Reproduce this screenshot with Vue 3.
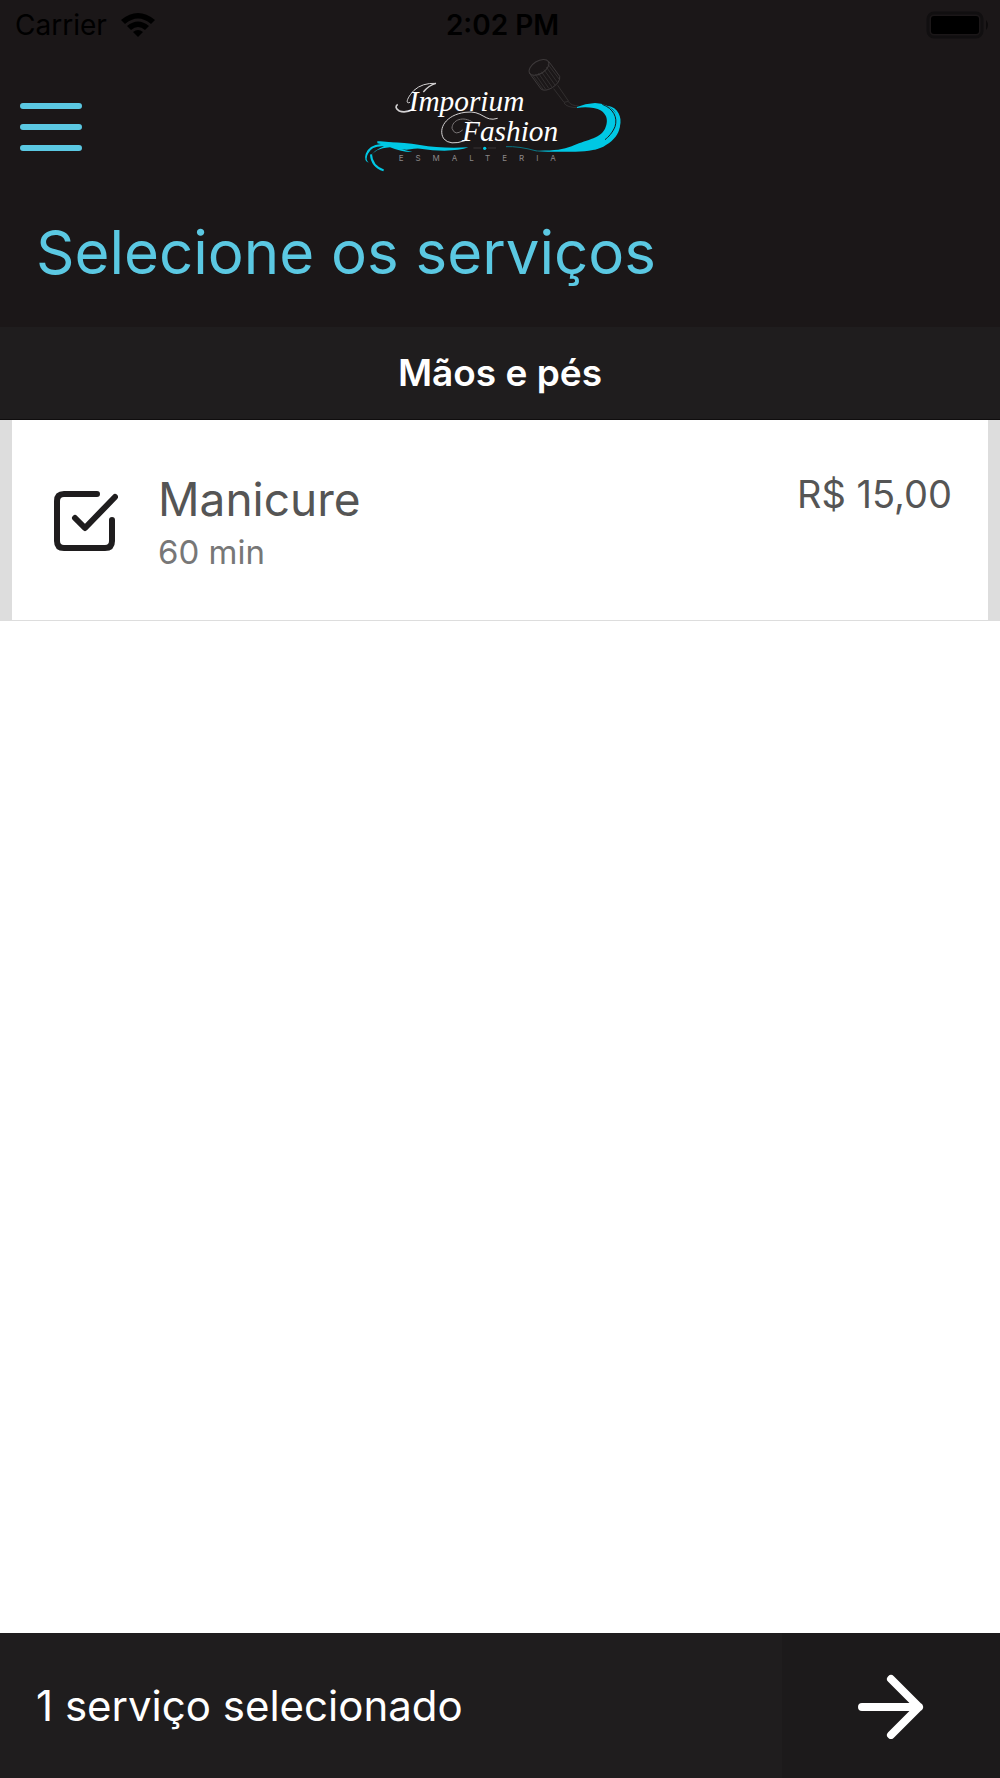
<template>
  <div class="booking">
    <header class="booking__header">
      <!-- Status bar -->
      <div class="status">
        <div class="status__carrier">
          <span>Carrier</span>
          <svg class="status__wifi" viewBox="0 0 34 25" aria-hidden="true">
            <path d="M0 7 Q17 -7 34 7 L30 11 Q17 0 4 11 Z" />
            <path d="M6 13 Q17 4 28 13 L24 17 Q17 11 10 17 Z" />
            <path d="M12 19 Q17 15 22 19 L17 24 Z" />
          </svg>
        </div>
        <span class="status__time">2:02 PM</span>
        <svg class="status__battery" viewBox="0 0 64 28" aria-hidden="true">
          <rect x="2" y="2" width="54" height="24" rx="6" fill="none" stroke="#110f10" stroke-width="3" />
          <rect x="5" y="5" width="48" height="18" rx="3" />
          <path d="M60 9 Q64 14 60 19 Z" fill="#0d0b0c" />
        </svg>
      </div>

      <!-- Menu + logo -->
      <nav class="nav">
        <button class="nav__menu" type="button" aria-label="Menu">
          <svg class="nav__menu-icon" viewBox="0 0 62 48" aria-hidden="true">
            <path d="M3 3 H59 M3 24 H59 M3 45 H59" />
          </svg>
        </button>
        <svg class="nav__logo" viewBox="0 54 900 360" role="img" aria-label="Imporium Fashion Esmalteria">
          <!-- Polish brush -->
          <g fill="none" stroke="#3d393a" stroke-width="3">
            <ellipse cx="567" cy="82" rx="33" ry="19" transform="rotate(-32 567 82)" />
            <path d="M538 99 L573 147 Q584 156 607 143 Q632 126 629 109 L596 64" />
            <path d="M547 104 L580 149 M556 103 L588 149 M565 99 L597 146 M574 95 L606 141 M582 89 L615 135 M589 81 L622 127 M594 73 L628 118" stroke-width="2" />
            <path d="M611 146 L642 187 M623 136 L656 184 M642 187 L656 184 M642 189 Q650 203 685 203 M656 186 Q664 197 686 198" stroke-width="2" />
          </g>
          <!-- Right wave -->
          <g fill="#00c8e4">
            <path d="M681 201 Q705 191 735 189 Q774 191 795 216 C822 251 813 291 760 320 C731 334 692 336 640 335 C599 336 574 335 550 332 C606 333 637 330 665 319 C703 300 750 297 765 266 C780 235 765 210 731 204 Q706 200 681 204 Z" />
            <path d="M773 197 C804 202 817 231 810 258 C799 290 771 316 731 330 C764 305 790 282 797 255 C806 228 798 210 773 199 Z" />
          </g>
          <path d="M757 193 C790 206 804 232 795 260 C787 279 775 291 765 299" fill="none" stroke="#1b1718" stroke-width="3" />
          <path d="M468 320 Q506 318 560 333" fill="none" stroke="#087483" stroke-width="3" />
          <!-- Left wave -->
          <path d="M82 310 C120 304 159 308 210 315 C253 323 307 325 355 322 C325 334 266 335 211 326 Q195 325 181 328 Q165 332 140 324 Q180 334 187 336 Q157 337 120 322 Q72 326 62 351 Q70 331 102 319 Q65 317 54 341 Q45 357 56 368 Q41 363 47 342 Q56 315 93 312 Z" fill="#00c8e4" />
          <path d="M63 343 Q65 379 101 391 M82 307 Q110 305 140 315" fill="none" stroke="#00c8e4" stroke-width="6" />
          <path d="M370 324 H394 M414 324 H438" fill="none" stroke="#464243" stroke-width="2" />
          <circle cx="404" cy="325" r="5" fill="#00c8e4" />
          <!-- Name -->
          <g fill="none" stroke="#d4d2d3" stroke-width="3">
            <path d="M258 130 Q217 128 192 151 C172 172 164 194 180 187" />
            <path d="M258 130 Q236 136 220 156" stroke-width="4" />
            <path d="M190 208 Q166 220 148 213 Q131 202 143 193" stroke-width="5" />
            <path d="M443 235 C402 248 400 209 345 217 C287 225 263 266 281 296 Q299 318 345 302" />
            <path d="M370 248 C340 226 306 240 306 265 Q315 290 338 270" stroke="#777374" />
          </g>
          <g class="nav__logo-name">
            <text x="176" y="212">Imporium</text>
            <text x="336" y="304">Fashion</text>
          </g>
          <text class="nav__logo-tag" x="146" y="362">ESMALTERIA</text>
        </svg>
      </nav>

      <h1 class="booking__title">Selecione os serviços</h1>
    </header>

    <main class="booking__content">
      <section v-for="category in categories" :key="category.name">
        <h2 class="category">{{ category.name }}</h2>
        <ul class="services">
          <li v-for="service in category.services" :key="service.id">
            <label class="service">
              <input v-model="selected" class="service__input" type="checkbox" :value="service.id" />
              <svg class="service__check" viewBox="0 0 64 60" aria-hidden="true">
                <path d="M43 3 H10 Q3 3 3 10 V50 Q3 57 10 57 H51 Q58 57 58 50 V29" />
                <path v-if="selected.includes(service.id)" d="M21 27 L31 37 L61 6" />
              </svg>
              <span class="service__info">
                <span class="service__name">{{ service.name }}</span>
                <span class="service__duration">{{ service.duration }} min</span>
              </span>
              <span class="service__price">{{ service.price }}</span>
            </label>
          </li>
        </ul>
      </section>
    </main>

    <footer class="summary">
      <p class="summary__text">{{ summary }}</p>
      <button class="summary__next" type="button" aria-label="Continuar">
        <svg class="summary__arrow" viewBox="0 0 66 66" aria-hidden="true">
          <path d="M4 34 H61 M33 6 L61 34 L33 62" />
        </svg>
      </button>
    </footer>
  </div>
</template>

<script setup>
import { ref, computed } from "vue";

const categories = [
  {
    name: "Mãos e pés",
    services: [{ id: 1, name: "Manicure", duration: 60, price: "R$ 15,00" }],
  },
];

const selected = ref([1]);

const summary = computed(() => {
  const total = selected.value.length;
  return total === 1 ? "1 serviço selecionado" : `${total} serviços selecionados`;
});
</script>

<style>
body {
  margin: 0;
  background: #fff;
}
</style>

<style scoped>
.booking {
  display: flex;
  flex-direction: column;
  min-height: 100vh;
  font-family: Inter, Roboto, sans-serif;
}

.booking__header {
  background: #1b1718;
}

.booking__title {
  margin: 0;
  padding: 30px 36px 39px;
  color: #5bc8e2;
  font-size: 60px;
  font-weight: 400;
  line-height: 72px;
}

.booking__content {
  flex: 1;
}

/* Status bar */
.status {
  display: grid;
  grid-template-columns: 1fr auto 1fr;
  align-items: center;
  height: 50px;
  padding: 0 10px 0 15px;
  color: #000;
  font-size: 28px;
  line-height: 34px;
}

.status__carrier {
  display: flex;
  align-items: center;
  gap: 14px;
}

.status__wifi {
  width: 34px;
  height: 25px;
}

.status__time {
  font-weight: 600;
}

.status__battery {
  justify-self: end;
  width: 64px;
  height: 28px;
}

/* Menu + logo */
.nav {
  display: grid;
  grid-template-columns: 1fr auto 1fr;
  padding: 8px 0;
}

.nav__menu {
  justify-self: start;
  padding: 45px 20px 27px;
  border: 0;
  background: none;
  cursor: pointer;
}

.nav__menu-icon {
  display: block;
  width: 62px;
  height: 48px;
  fill: none;
  stroke: #5bc8e2;
  stroke-width: 6;
  stroke-linecap: round;
}

.nav__logo {
  display: block;
  width: 300px;
  height: 120px;
}

.nav__logo-name {
  fill: #fff;
  font-family: "Liberation Serif", serif;
  font-size: 88px;
  font-style: italic;
}

.nav__logo-tag {
  fill: #8b8788;
  font-size: 24px;
  letter-spacing: 36px;
}

/* Services */
.category {
  margin: 0;
  padding: 23px 36px;
  border-bottom: 1px solid #0f0d0e;
  background: #1f1d1e;
  color: #fff;
  font-size: 37px;
  font-weight: 600;
  line-height: 46px;
  text-align: center;
}

.services {
  margin: 0;
  padding: 0;
  list-style: none;
}

.service {
  position: relative;
  display: flex;
  align-items: center;
  gap: 40px;
  padding: 49px 36px 47px 42px;
  border: solid #ddd;
  border-width: 0 12px 1px;
  background: #fff;
  cursor: pointer;
}

.service__input {
  position: absolute;
  width: 64px;
  height: 60px;
  margin: 0;
  opacity: 0;
}

.service__check {
  width: 64px;
  height: 60px;
  fill: none;
  stroke: #1f1d1e;
  stroke-width: 6;
  stroke-linecap: round;
  stroke-linejoin: round;
}

.service__info {
  display: flex;
  flex: 1;
  flex-direction: column;
  gap: 2px;
}

.service__name {
  color: #555;
  font-size: 46px;
  line-height: 60px;
}

.service__duration {
  color: #777;
  font-size: 33px;
  line-height: 42px;
}

.service__price {
  align-self: flex-start;
  padding-top: 2px;
  color: #555;
  font-size: 38px;
  line-height: 46px;
}

/* Summary */
.summary {
  display: flex;
  min-height: 145px;
  background: #1f1d1e;
  color: #fff;
}

.summary__text {
  flex: 1;
  align-self: center;
  margin: 0;
  padding: 0 36px;
  font-size: 42px;
  line-height: 52px;
}

.summary__next {
  display: flex;
  align-items: center;
  justify-content: center;
  width: 218px;
  padding: 0;
  border: 0;
  background: #1c1a1b;
  cursor: pointer;
}

.summary__arrow {
  width: 66px;
  height: 66px;
  fill: none;
  stroke: #fff;
  stroke-width: 8;
  stroke-linecap: round;
  stroke-linejoin: round;
}
</style>
